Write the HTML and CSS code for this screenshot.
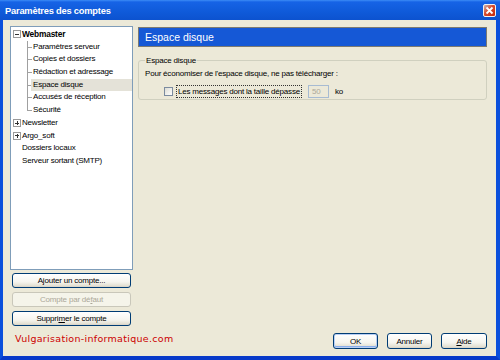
FILE: index.html
```html
<!DOCTYPE html>
<html lang="fr">
<head>
    <meta charset="UTF-8">
    <title>Paramètres des comptes</title>
    <link rel="stylesheet" href="styles.css">
</head>
<body>
    <div class="window">
        <div class="titlebar">
            <span class="title">Paramètres des comptes</span>
            <span class="close">
                <svg width="9" height="9" viewBox="0 0 9 9"><path d="M1.5 1.5 L7.5 7.5 M7.5 1.5 L1.5 7.5" stroke="#fff" stroke-width="1.8"/></svg>
            </span>
        </div>

        <div class="content">
            <div class="left">
                <div class="tree">
                    <div class="node"><span class="exp minus"></span><b>Webmaster</b></div>
                    <div class="kids">
                        <div class="kid"><span>Paramètres serveur</span></div>
                        <div class="kid"><span>Copies et dossiers</span></div>
                        <div class="kid"><span>Rédaction et adressage</span></div>
                        <div class="kid selected"><span>Espace disque</span></div>
                        <div class="kid"><span>Accusés de réception</span></div>
                        <div class="kid last"><span>Sécurité</span></div>
                    </div>
                    <div class="node"><span class="exp plus"></span>Newsletter</div>
                    <div class="node"><span class="exp plus"></span>Argo_soft</div>
                    <div class="node leaf">Dossiers locaux</div>
                    <div class="node leaf">Serveur sortant (SMTP)</div>
                </div>

                <div class="account-buttons">
                    <button class="btn">A<u>j</u>outer un compte...</button>
                    <button class="btn" disabled>Compte par dé<u>f</u>aut</button>
                    <button class="btn">Suppri<u>m</u>er le compte</button>
                </div>

                <div class="brand">Vulgarisation-informatique.com</div>
            </div>

            <div class="right">
                <div class="page-head">Espace disque</div>

                <fieldset class="group">
                    <legend>Espace disque</legend>
                    <div class="line">Pour économiser de l'espace disque, ne pas télécharger :</div>
                    <div class="check-row">
                        <span class="checkbox"></span>
                        <span class="check-label">Les messages dont la taille dépasse</span>
                        <span class="num-input">50</span>
                        <span class="unit">ko</span>
                    </div>
                </fieldset>

                <div class="dialog-buttons">
                    <button class="btn default">OK</button>
                    <button class="btn">Annuler</button>
                    <button class="btn wide"><u>A</u>ide</button>
                </div>
            </div>
        </div>
    </div>
</body>
</html>
```

FILE: styles.css
```css
body {
    margin: 0;
    background: #ffffff;
    font-family: "Liberation Sans", Arial, sans-serif;
    font-size: 8px;
    letter-spacing: -0.2px;
    color: #000000;
}
.window {
    width: 500px;
    height: 360px;
    box-sizing: border-box;
    display: flex;
    flex-direction: column;
    background: #ece9d8;
    border-left: 3px solid #0a4fdc;
    border-right: 4px solid #0a4fdc;
    border-bottom: 4px solid #0739c9;
}
.titlebar {
    height: 20px;
    margin: 0 -4px 0 -3px;
    padding: 0 4px 0 5px;
    display: flex;
    align-items: center;
    justify-content: space-between;
    background: linear-gradient(#3c8cf6 0, #1663e6 2px, #0f5ad9 60%, #0c52cf 100%);
}
.title {
    color: #ffffff;
    font-weight: bold;
    font-size: 9.3px;
    letter-spacing: -0.2px;
    padding-top: 1px;
}
.close {
    width: 13px;
    height: 13px;
    box-sizing: border-box;
    display: flex;
    align-items: center;
    justify-content: center;
    border: 1px solid #f2f2f2;
    border-radius: 2px;
    background: linear-gradient(135deg, #c8b8b4 0, #d84a2c 45%, #c42a0c 100%);
}
.content {
    flex: 1;
    display: flex;
    gap: 5px;
    padding: 6px 9px 0 7px;
}

/* colonne de gauche */
.left {
    width: 123px;
    display: flex;
    flex-direction: column;
}
.tree {
    height: 244px;
    box-sizing: border-box;
    background: #ffffff;
    border: 1px solid #7f9db9;
    padding-top: 1px;
    line-height: 12.7px;
    white-space: nowrap;
}
.node {
    display: flex;
    align-items: center;
    height: 12.7px;
    padding-left: 2px;
}
.node.leaf {
    padding-left: 11px;
}
.node b {
    font-size: 8.4px;
}
.exp {
    width: 8px;
    height: 8px;
    box-sizing: border-box;
    margin-right: 1px;
    border: 1px solid #9a9a9a;
    background: #ffffff;
    position: relative;
}
.exp::before,
.exp.plus::after {
    content: "";
    position: absolute;
    background: #333333;
}
.exp::before {
    left: 1px;
    top: 2.5px;
    width: 4px;
    height: 1px;
}
.exp.plus::after {
    left: 2.5px;
    top: 1px;
    width: 1px;
    height: 4px;
}
.kid {
    display: flex;
    height: 12.7px;
    padding-left: 20px;
    background-image: linear-gradient(#a0a0a0, #a0a0a0), linear-gradient(#a0a0a0, #a0a0a0);
    background-repeat: no-repeat;
    background-position: 16px 0, 16px 50%;
    background-size: 1px 100%, 5px 1px;
}
.kid.last {
    background-size: 1px 50%, 5px 1px;
}
.kid span {
    flex: 1;
    padding-left: 2px;
}
.kid.selected span {
    background: #e4e2d8;
}

.account-buttons {
    display: flex;
    flex-direction: column;
    gap: 4px;
    margin-top: 3px;
    padding: 0 2px;
}
.btn {
    height: 15px;
    padding: 0;
    font-family: inherit;
    font-size: 8px;
    letter-spacing: -0.2px;
    color: #000000;
    border: 1px solid #003c74;
    border-radius: 3px;
    background: linear-gradient(#ffffff 0, #f6f5ef 60%, #e3e0d3 90%, #d6d0c5 100%);
}
.btn:disabled {
    color: #aca899;
    border-color: #c9c7ba;
    background: #f5f4ea;
}
.brand {
    margin-top: 7px;
    padding-left: 5px;
    font-family: "DejaVu Sans", Verdana, sans-serif;
    font-size: 9.5px;
    letter-spacing: 0.3px;
    line-height: 12px;
    white-space: nowrap;
    color: #cc0000;
}

/* colonne de droite */
.right {
    flex: 1;
    display: flex;
    flex-direction: column;
}
.page-head {
    height: 20px;
    margin-top: 1px;
    box-sizing: border-box;
    padding-left: 6px;
    display: flex;
    align-items: center;
    background: #1558d6;
    border: 1px solid #7b7a72;
    color: #ffffff;
    font-size: 10.5px;
    letter-spacing: 0;
}
.group {
    margin: 8px 0 0 0;
    padding: 0 6px 1px 6px;
    border: 1px solid #d0d0bf;
    border-radius: 3px;
    line-height: 11px;
}
.group legend {
    padding: 0 1px;
}
.line {
    margin-top: 2px;
    line-height: 12px;
}
.check-row {
    display: flex;
    align-items: center;
    height: 14px;
    margin-top: 4px;
}
.checkbox {
    width: 9px;
    height: 9px;
    box-sizing: border-box;
    margin-left: 19px;
    border: 1px solid #7b8b9f;
    background: linear-gradient(135deg, #dcdcd4, #ffffff);
}
.check-label {
    margin-left: 3px;
    padding: 0 1px;
    border: 1px dotted #333333;
    line-height: 11px;
}
.num-input {
    width: 21px;
    height: 13px;
    box-sizing: border-box;
    margin-left: 6px;
    padding-left: 3px;
    border: 1px solid #a7bbd2;
    background: #ece9d8;
    color: #aca899;
    line-height: 11px;
}
.unit {
    margin-left: 6px;
}
.dialog-buttons {
    margin-top: auto;
    margin-bottom: 7px;
    display: flex;
    justify-content: flex-end;
    gap: 9px;
}
.dialog-buttons .btn {
    width: 45px;
    height: 16px;
}
.dialog-buttons .btn.wide {
    width: 46px;
}
.btn.default {
    box-shadow: inset 0 0 0 1px #b8cff5, inset 0 -1px 0 1px #89adeb;
}
```
